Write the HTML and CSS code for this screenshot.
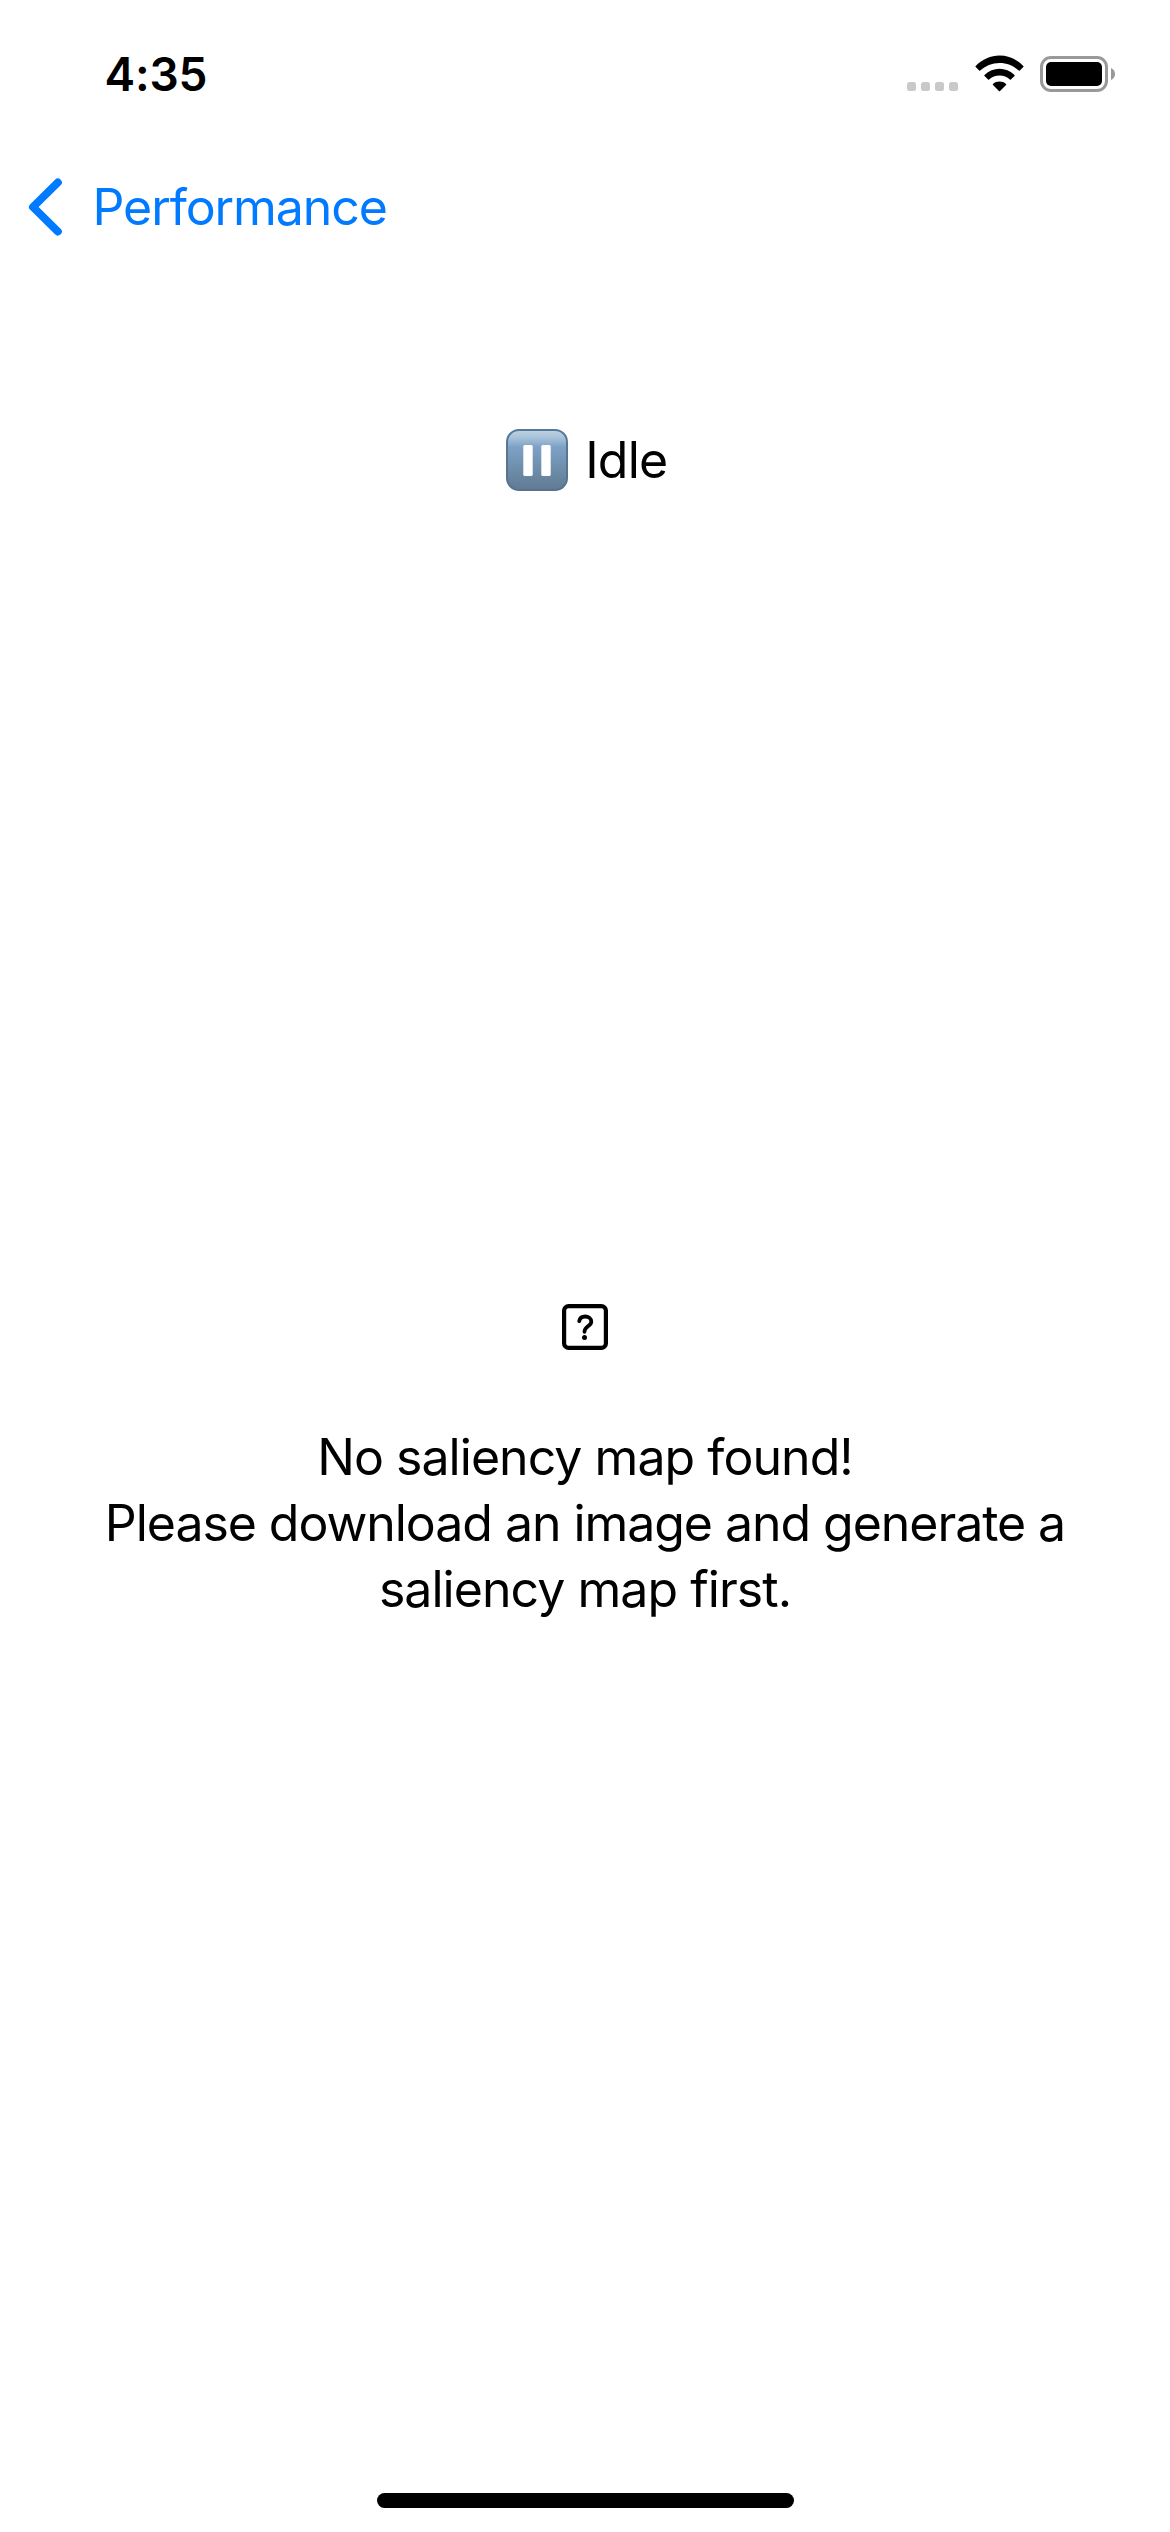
FILE: index.html
```html
<!DOCTYPE html>
<html lang="en">
<head>
<meta charset="utf-8">
<title>Performance</title>
<link rel="stylesheet" href="styles.css">
</head>
<body>
<div class="screen">
  <header class="status-bar">
    <span class="time">4:35</span>
    <div class="indicators">
      <svg class="cellular" width="51" height="9" viewBox="0 0 51 9" fill="#c9c9c9">
        <rect x="0" width="9" height="9" rx="2.5"/>
        <rect x="14" width="9" height="9" rx="2.5"/>
        <rect x="28" width="9" height="9" rx="2.5"/>
        <rect x="42" width="9" height="9" rx="2.5"/>
      </svg>
      <svg class="wifi" width="49" height="37" viewBox="0 0 49 37">
        <path d="M24.5 7.9C32 7.9 38.8 10.8 43.8 15.6Q44.3 16 44.8 15.6L48.3 12Q48.8 11.500 48.300 11C35 -3.100 14 -3.100 0.700 11Q0.200 11.500 0.700 12L4.200 15.600Q4.700 16 5.200 15.600C10.200 10.800 17 7.900 24.500 7.900Z"/>
        <path d="M24.500 20.600C28.500 20.600 32.100 22.100 34.900 24.600Q35.400 25 35.900 24.600L39.500 21Q40 20.500 39.500 20C31 11.600 18 11.600 9.500 20Q9 20.500 9.500 21L13.100 24.600Q13.600 25 14.100 24.600C16.900 22.100 20.500 20.600 24.500 20.600Z"/>
        <path d="M31 28.900Q31.500 29.400 31 29.900L25 36Q24.500 36.500 24 36L18 29.900Q17.500 29.400 18 28.900C21.700 25.700 27.300 25.700 31 28.900Z"/>
      </svg>
      <svg class="battery" width="75" height="36" viewBox="0 0 75 36">
        <rect x="1.500" y="1.500" width="65" height="33" rx="9.500" fill="none" stroke="#999" stroke-width="3"/>
        <rect x="6" y="6" width="56" height="24" rx="5" fill="#000"/>
        <path d="M71 12Q75 14 75 18T71 24Z" fill="#999"/>
      </svg>
    </div>
  </header>
  <nav class="nav-bar">
    <a class="back">
      <svg width="34" height="60" viewBox="0 0 34 60"><path d="M29.800 5.500 5 30 29.800 54.500" fill="none" stroke="currentColor" stroke-width="8" stroke-linecap="round" stroke-linejoin="round"/></svg>
      <span>Performance</span>
    </a>
  </nav>
  <main class="content">
    <div class="state">
      <svg width="62" height="62" viewBox="0 0 62 62">
        <defs>
          <linearGradient id="face" x1="0" y1="0" x2="0" y2="1">
            <stop offset="0" stop-color="#bfd2e0"/>
            <stop offset=".12" stop-color="#a9c4da"/>
            <stop offset=".28" stop-color="#7ea2c7"/>
            <stop offset=".55" stop-color="#7293b1"/>
            <stop offset="1" stop-color="#607a93"/>
          </linearGradient>
          <linearGradient id="edge" x1="0" y1="0" x2="0" y2="1">
            <stop offset="0" stop-color="#56789a"/>
            <stop offset="1" stop-color="#58728d"/>
          </linearGradient>
        </defs>
        <rect x="1" y="1" width="60" height="60" rx="12" fill="url(#face)" stroke="url(#edge)" stroke-width="2"/>
        <rect x="17.300" y="16" width="9.400" height="31" rx="1.500" fill="#fff"/>
        <rect x="35.300" y="16" width="9.400" height="31" rx="1.500" fill="#fff"/>
      </svg>
      <span>Idle</span>
    </div>
    <section class="empty">
      <svg width="46" height="46" viewBox="0 0 46 46" fill="none" stroke="#000" stroke-linecap="round">
        <rect x="2.100" y="2.100" width="41.800" height="41.800" rx="4.500" stroke-width="4.200"/>
        <path d="M17.200 17.100C17.800 14 20 12.500 23.100 12.500C26.600 12.500 29.300 14.500 29.300 17.700C29.300 22 22.500 22.200 22.500 27.800" stroke-width="3.800"/>
        <circle cx="22.500" cy="33.500" r="2.500" fill="#000" stroke="none"/>
      </svg>
      <p class="message">No saliency map found!<br><span class="instruction">Please download an image and generate a<br></span>saliency map first.</p>
    </section>
  </main>
  <footer class="home"><div class="home-indicator"></div></footer>
</div>
</body>
</html>
```

FILE: styles.css
```css
body {
  margin: 0;
  background: #fff;
}

.screen {
  display: flex;
  flex-direction: column;
  width: 1170px;
  height: 2532px;
  overflow: hidden;
  color: #000;
  background: #fff;
  font: 400 50px/66px Inter, "Liberation Sans", sans-serif;
  letter-spacing: -1px;
}

.screen svg {
  display: block;
  flex: none;
}

.status-bar {
  display: flex;
  justify-content: space-between;
  box-sizing: border-box;
  height: 141px;
  padding: 46px 55px 0 104.600px;
}

.time {
  font-size: 46px;
  font-weight: 600;
  line-height: 56px;
  letter-spacing: -0.200px;
}

.indicators {
  display: flex;
  align-items: flex-start;
}

.cellular {
  margin: 36px 17px 0 0;
}

.wifi {
  margin: 9px 16px 0 0;
}

.battery {
  margin-top: 10px;
}

.nav-bar {
  display: flex;
  align-items: center;
  height: 132px;
  padding-left: 28px;
}

.back {
  display: flex;
  align-items: center;
  gap: 30.500px;
  color: #007aff;
  letter-spacing: -1.080px;
}

.content {
  display: flex;
  flex: 1;
  flex-direction: column;
  align-items: center;
  padding-top: 154px;
}

.state {
  display: flex;
  align-items: center;
  gap: 17.500px;
  height: 66px;
  padding-left: 3px;
  letter-spacing: -0.800px;
}

.empty {
  display: flex;
  flex-direction: column;
  align-items: center;
  gap: 74px;
  padding-top: 811px;
}

.message {
  margin: 0;
  text-align: center;
  letter-spacing: -0.950px;
}

.instruction {
  letter-spacing: -1.050px;
}

.home {
  display: flex;
  justify-content: center;
  padding-bottom: 24px;
}

.home-indicator {
  width: 417px;
  height: 15px;
  border-radius: 8px;
  background: #000;
}
```
